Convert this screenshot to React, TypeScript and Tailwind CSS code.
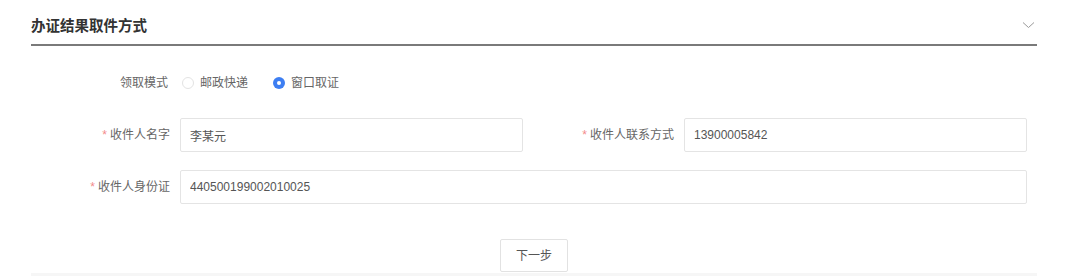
import { useState } from 'react'

const font = { fontFamily: '"Liberation Sans", "Noto Sans CJK SC", sans-serif' }

function Radio({ checked, label, onClick }: { checked: boolean; label: string; onClick: () => void }) {
  return (
    <label className="flex items-center cursor-pointer" onClick={onClick}>
      {checked ? (
        <span className="w-[12px] h-[12px] rounded-full bg-[#3d7ef2] flex items-center justify-center">
          <span className="w-[4px] h-[4px] rounded-full bg-white" />
        </span>
      ) : (
        <span className="w-[12px] h-[12px] rounded-full border border-[#e3e3e3] bg-white" />
      )}
      <span className="ml-[6px] text-[12px] text-[#666]">{label}</span>
    </label>
  )
}

function Field({ label, value, className }: { label: string; value: string; className?: string }) {
  return (
    <div className={`flex items-center ${className ?? ''}`}>
      <div className="w-[150px] shrink-0 pr-[10px] text-right text-[12px] text-[#666]">
        <span className="text-[#f38b8b] mr-[3px]">*</span>
        {label}
      </div>
      <input
        defaultValue={value}
        className="flex-1 min-w-0 h-[34px] border border-[#e4e4e4] rounded-[2px] pl-[9px] text-[12px] text-[#555] outline-none"
        style={font}
      />
    </div>
  )
}

export default function App() {
  const [mode, setMode] = useState<'post' | 'window'>('window')

  return (
    <div className="w-[1080px] h-[276px] bg-white overflow-hidden px-[30px]" style={font}>
      {/* header */}
      <div className="ml-[1px] w-[1006px] h-[46px] pt-[16px] border-b-2 border-[#7a7a7a] flex justify-between items-start">
        <h2 className="text-[14.5px] leading-[20px] font-bold text-[#333]">办证结果取件方式</h2>
        <svg width="13" height="8" viewBox="0 0 13 8" className="mt-[5px] mr-[2px]" fill="none">
          <path d="M1 1.5 L6.5 6.5 L12 1.5" stroke="#9a9a9a" strokeWidth="1" />
        </svg>
      </div>

      <div className="w-[997px]">
        {/* pickup mode */}
        <div className="mt-[20px] h-[34px] flex items-center">
          <div className="w-[150px] pr-[12px] text-right text-[12px] text-[#666]">领取模式</div>
          <div className="flex items-center gap-[25px] ml-[2px]">
            <Radio checked={mode === 'post'} label="邮政快递" onClick={() => setMode('post')} />
            <Radio checked={mode === 'window'} label="窗口取证" onClick={() => setMode('window')} />
          </div>
        </div>

        <div className="grid grid-cols-2 gap-x-[11px] mt-[18px]">
          <Field label="收件人名字" value="李某元" />
          <Field label="收件人联系方式" value="13900005842" />
        </div>

        <Field label="收件人身份证" value="440500199002010025" className="mt-[18px]" />
      </div>

      <div className="ml-[1px] w-[1006px]">
        <div className="mt-[35px] flex justify-center">
          <button className="w-[68px] h-[33px] border border-[#e2e2e2] rounded-[2px] bg-white text-[12px] text-[#555]">
            下一步
          </button>
        </div>

        <div className="mt-[1px] h-[10px] bg-[#f6f6f6]" />
      </div>
    </div>
  )
}
